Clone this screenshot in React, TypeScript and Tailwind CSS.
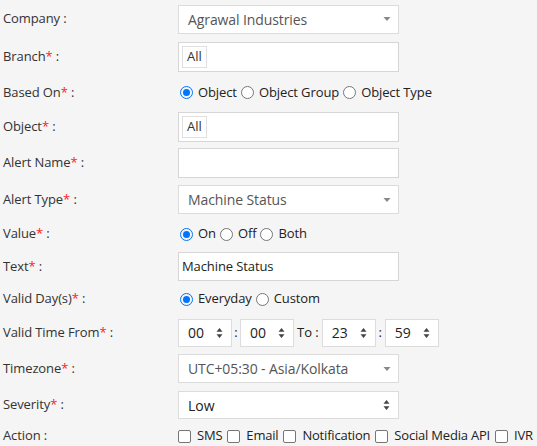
import React from 'react'

const Star = () => <span className="text-[#ff1a1a]">*</span>

function Label({ text, req }: { text: string; req?: boolean }) {
  return (
    <div className="w-[178px] shrink-0 whitespace-nowrap pl-[3px] text-[13px] tracking-[-0.1px] text-[#333]">
      {text}
      {req && <Star />} :
    </div>
  )
}

function Row({ h, children }: { h: string; children: React.ReactNode }) {
  return <div className={`flex items-center ${h}`}>{children}</div>
}

const Caret = () => (
  <svg width="8" height="5" viewBox="0 0 8 5" className="absolute right-[7px] top-1/2 -translate-y-1/2">
    <path d="M0.5 0.5h7L4 4.5z" fill="#888" />
  </svg>
)

const Spin = ({ cls }: { cls: string }) => (
  <svg width="7" height="11" viewBox="0 0 7 11" className={cls}>
    <path d="M3.5 0.5L6.5 4.3H0.5z M3.5 10.5L6.5 6.7H0.5z" fill="#444" />
  </svg>
)

function SelectBox({ value }: { value: string }) {
  return (
    <div className="relative flex h-[29px] w-[221px] items-center border border-[#dcdcdc] bg-white pl-[9px] text-[14px] tracking-[-0.1px] text-[#555]">
      {value}
      <Caret />
    </div>
  )
}

function TagBox() {
  return (
    <div className="flex h-[30px] w-[221px] items-center border border-[#d6d6d6] bg-white pl-[3px]">
      <span className="flex h-[22px] items-center border border-[#e0e0e0] px-[4px] text-[13px] text-[#333]">All</span>
    </div>
  )
}

function Radio({ on, label }: { on?: boolean; label: string }) {
  return (
    <span className="flex items-center whitespace-nowrap">
      {on ? (
        <span className="mr-[5px] flex h-[13px] w-[13px] items-center justify-center rounded-full border-[1.5px] border-[#0075ff]">
          <span className="h-[7px] w-[7px] rounded-full bg-[#0075ff]" />
        </span>
      ) : (
        <span className="mr-[5px] h-[13px] w-[13px] rounded-full border border-[#767676] bg-white" />
      )}
      <span className="mr-[4px]">{label}</span>
    </span>
  )
}

function Check({ label }: { label: string }) {
  return (
    <span className="flex items-center whitespace-nowrap">
      <span className="mr-[6px] h-[13px] w-[13px] shrink-0 rounded-[2px] border border-[#767676] bg-white" />
      <span className="mr-[5px]">{label}</span>
    </span>
  )
}

function TimeBox({ v }: { v: string }) {
  return (
    <div className="relative flex h-[28px] w-[54px] items-center border border-[#dcdcdc] bg-white pl-[9px] text-[14px] text-[#222]">
      {v}
      <Spin cls="absolute right-[8px] top-1/2 -translate-y-1/2" />
    </div>
  )
}

export default function App() {
  return (
    <div
      className="h-[446px] w-[537px] overflow-hidden bg-[#f5f5f5] text-[13px] text-[#222]"
      style={{ fontFamily: '"Open Sans", sans-serif' }}
    >
      <Row h="h-[38px]">
        <Label text="Company" />
        <SelectBox value="Agrawal Industries" />
      </Row>
      <Row h="h-[37px]">
        <Label text="Branch" req />
        <TagBox />
      </Row>
      <Row h="h-[35px]">
        <Label text="Based On" req />
        <div className="flex items-center pl-[2px] text-[13px] tracking-[-0.1px]">
          <Radio on label="Object" />
          <Radio label="Object Group" />
          <Radio label="Object Type" />
        </div>
      </Row>
      <Row h="h-[34px]">
        <Label text="Object" req />
        <TagBox />
      </Row>
      <Row h="h-[38px]">
        <Label text="Alert Name" req />
        <div className="h-[30px] w-[221px] border border-[#d6d6d6] bg-white" />
      </Row>
      <Row h="h-[35px]">
        <Label text="Alert Type" req />
        <SelectBox value="Machine Status" />
      </Row>
      <Row h="h-[34px]">
        <Label text="Value" req />
        <div className="flex items-center pl-[2px] text-[13px] tracking-[-0.1px]">
          <Radio on label="On" />
          <Radio label="Off" />
          <Radio label="Both" />
        </div>
      </Row>
      <Row h="h-[31px]">
        <Label text="Text" req />
        <div className="flex h-[29px] w-[221px] items-center border border-[#d6d6d6] bg-white pl-[3px] text-[13px] tracking-[-0.1px] text-[#222]">
          Machine Status
        </div>
      </Row>
      <Row h="h-[34px]">
        <Label text="Valid Day(s)" req />
        <div className="flex items-center pl-[2px] text-[13px] tracking-[-0.1px]">
          <Radio on label="Everyday" />
          <Radio label="Custom" />
        </div>
      </Row>
      <Row h="h-[33px]">
        <Label text="Valid Time From" req />
        <div className="flex items-center text-[13px]">
          <TimeBox v="00" />
          <span className="w-[8px] text-center">:</span>
          <TimeBox v="00" />
          <span className="whitespace-nowrap px-[3px]">To :</span>
          <TimeBox v="23" />
          <span className="w-[9px] text-center">:</span>
          <TimeBox v="59" />
        </div>
      </Row>
      <Row h="h-[39px]">
        <Label text="Timezone" req />
        <SelectBox value="UTC+05:30 - Asia/Kolkata" />
      </Row>
      <Row h="h-[34px]">
        <Label text="Severity" req />
        <div className="relative flex h-[28px] w-[221px] items-center border border-[#dcdcdc] bg-white pl-[9px] text-[14px] text-[#222]">
          Low
          <Spin cls="absolute right-[8px] top-1/2 -translate-y-1/2" />
        </div>
      </Row>
      <Row h="h-[28px]">
        <Label text="Action" />
        <div className="flex shrink-0 items-center text-[13px] tracking-[-0.2px]">
          <Check label="SMS" />
          <Check label="Email" />
          <Check label="Notification" />
          <Check label="Social Media API" />
          <Check label="IVR" />
        </div>
      </Row>
    </div>
  )
}
